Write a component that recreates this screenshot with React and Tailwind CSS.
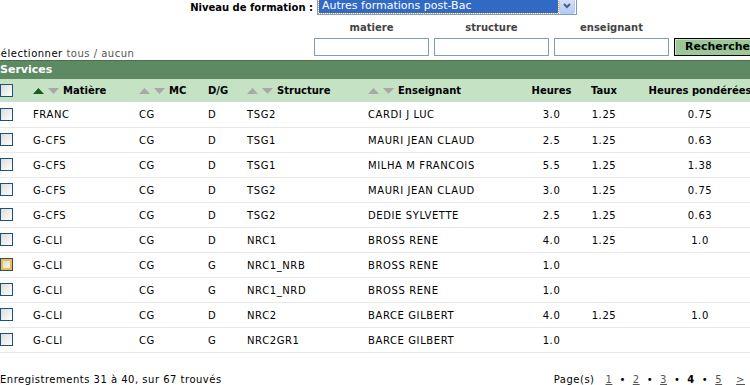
import React from "react";

const rows = [
  ["FRANC", "CG", "D", "TSG2", "CARDI J LUC", "3.0", "1.25", "0.75"],
  ["G-CFS", "CG", "D", "TSG1", "MAURI JEAN CLAUD", "2.5", "1.25", "0.63"],
  ["G-CFS", "CG", "D", "TSG1", "MILHA M FRANCOIS", "5.5", "1.25", "1.38"],
  ["G-CFS", "CG", "D", "TSG2", "MAURI JEAN CLAUD", "3.0", "1.25", "0.75"],
  ["G-CFS", "CG", "D", "TSG2", "DEDIE SYLVETTE", "2.5", "1.25", "0.63"],
  ["G-CLI", "CG", "D", "NRC1", "BROSS RENE", "4.0", "1.25", "1.0"],
  ["G-CLI", "CG", "G", "NRC1_NRB", "BROSS RENE", "1.0", "", ""],
  ["G-CLI", "CG", "G", "NRC1_NRD", "BROSS RENE", "1.0", "", ""],
  ["G-CLI", "CG", "D", "NRC2", "BARCE GILBERT", "4.0", "1.25", "1.0"],
  ["G-CLI", "CG", "G", "NRC2GR1", "BARCE GILBERT", "1.0", "", ""],
];

function Check({ hot }) {
  return (
    <div className="w-[13px] h-[13px] border border-[#1C5180] bg-gradient-to-br from-[#DCDCD7] to-[#FFFFFF] flex items-center justify-center">
      {hot && (
        <div className="w-[11px] h-[11px] border-2 border-[#F8B940] bg-gradient-to-br from-[#DCDCD7] to-[#F4F4F0]" />
      )}
    </div>
  );
}

function Sort({ active }) {
  return (
    <span className="inline-flex items-center gap-[4px] mr-[4px]">
      <svg width="11" height="6" viewBox="0 0 11 6">
        <polygon points="0,6 11,6 5.5,0" fill={active ? "#1E5B1E" : "#A8A8A8"} />
      </svg>
      <svg width="11" height="6" viewBox="0 0 11 6">
        <polygon points="0,0 11,0 5.5,6" fill="#A8A8A8" />
      </svg>
    </span>
  );
}

export default function App() {
  return (
    <div className="w-[750px] h-[385px] overflow-hidden bg-white text-black font-['DejaVu_Sans',sans-serif] text-[10px]">
      {/* top form */}
      <div className="h-[60px]">
        <div className="flex items-start pt-[1px]">
          <div className="w-[313px] shrink-0 text-right font-bold leading-[13px]">Niveau de formation :</div>
          <div className="ml-[4px] mt-[-4px] w-[260px] h-[18px] shrink-0 border border-[#7F9DB9] bg-white flex items-center pl-[1px] pr-[1px]">
            <div className="flex-1 h-[14px] bg-[#316AC5] outline-1 outline-dotted outline-[#E0A040] text-white text-[11px] leading-[14px] pl-[3px] whitespace-nowrap">
              Autres formations post-Bac
            </div>
            <div className="w-[16px] h-[16px] ml-[1px] rounded-[2px] bg-gradient-to-b from-[#D6E2FC] to-[#B5C9F3] border border-[#B9CCF5] flex items-center justify-center">
              <svg width="8" height="6" viewBox="0 0 8 6">
                <polyline points="1,1 4,4 7,1" fill="none" stroke="#4D6185" strokeWidth="2" />
              </svg>
            </div>
          </div>
        </div>
        <div className="mt-[7px] pl-[314px] flex gap-[5px] leading-[12px] font-bold text-[#444]">
          <div className="w-[115px] shrink-0 text-center">matiere</div>
          <div className="w-[115px] shrink-0 text-center">structure</div>
          <div className="w-[115px] shrink-0 text-center">enseignant</div>
        </div>
        <div className="mt-[4px] flex items-end">
          <div className="w-[314px] shrink-0 ml-[-6px] mr-[6px] mb-[-4px] leading-[12px] whitespace-nowrap tracking-[0.5px]">
            Sélectionner <span className="text-[#555]">tous / aucun</span>
          </div>
          <div className="flex gap-[5px] shrink-0">
            <div className="w-[115px] h-[18px] border border-[#7F9DB9] bg-white" />
            <div className="w-[115px] h-[18px] border border-[#7F9DB9] bg-white" />
            <div className="w-[115px] h-[18px] border border-[#7F9DB9] bg-white" />
          </div>
          <div className="ml-[5px] w-[90px] h-[18px] shrink-0 border border-black bg-[#9CC899] shadow-[inset_1px_1px_0_#C8E4C6] font-bold text-[11px] leading-[16px] pl-[10px] whitespace-nowrap">
            Recherche
          </div>
        </div>
      </div>

      {/* Services bar */}
      <div className="h-[19px] border-t border-[#467246] bg-[#5D8A63] text-white font-bold text-[11px] leading-[18px] whitespace-nowrap">
        Services
      </div>

      <table className="table-fixed border-collapse w-[773px]">
        <colgroup>
          <col className="w-[33px]" />
          <col className="w-[106px]" />
          <col className="w-[69px]" />
          <col className="w-[39px]" />
          <col className="w-[121px]" />
          <col className="w-[154px]" />
          <col className="w-[59px]" />
          <col className="w-[46px]" />
          <col className="w-[146px]" />
        </colgroup>
        <thead>
          <tr className="h-[23px] bg-[#C5E2C5] font-bold text-left">
            <th className="p-0 align-middle"><Check /></th>
            <th className="p-0 whitespace-nowrap"><span className="inline-flex items-center"><Sort active />Matière</span></th>
            <th className="p-0 whitespace-nowrap"><span className="inline-flex items-center"><Sort />MC</span></th>
            <th className="p-0 whitespace-nowrap">D/G</th>
            <th className="p-0 whitespace-nowrap"><span className="inline-flex items-center"><Sort />Structure</span></th>
            <th className="p-0 whitespace-nowrap"><span className="inline-flex items-center"><Sort />Enseignant</span></th>
            <th className="p-0 text-center whitespace-nowrap">Heures</th>
            <th className="p-0 text-center whitespace-nowrap">Taux</th>
            <th className="p-0 text-center whitespace-nowrap">Heures pondérées</th>
          </tr>
        </thead>
        <tbody className="tracking-[0.6px]">
          {rows.map((r, i) => (
            <tr key={i} className="h-[25px] border-b border-[#E8E8E8]">
              <td className="p-0 align-middle"><Check hot={i === 6} /></td>
              <td className="p-0 pt-[1px] whitespace-nowrap">{r[0]}</td>
              <td className="p-0 pt-[1px] whitespace-nowrap">{r[1]}</td>
              <td className="p-0 pt-[1px] whitespace-nowrap">{r[2]}</td>
              <td className="p-0 pt-[1px] whitespace-nowrap">{r[3]}</td>
              <td className="p-0 pt-[1px] whitespace-nowrap">{r[4]}</td>
              <td className="p-0 pt-[1px] text-center whitespace-nowrap">{r[5]}</td>
              <td className="p-0 pt-[1px] text-center whitespace-nowrap">{r[6]}</td>
              <td className="p-0 pt-[1px] text-center whitespace-nowrap">{r[7]}</td>
            </tr>
          ))}
        </tbody>
      </table>

      <div className="mt-[21px] flex justify-between leading-[12px] whitespace-nowrap tracking-[0.5px]">
        <div>Enregistrements 31 à 40, sur 67 trouvés</div>
        <div className="flex items-center gap-[7px] pr-[5px]">
          <span className="mr-[4px]">Page(s)</span>
          <span className="underline text-[#555]">1</span>
          <span>•</span>
          <span className="underline text-[#555]">2</span>
          <span>•</span>
          <span className="underline text-[#555]">3</span>
          <span>•</span>
          <span className="font-bold">4</span>
          <span>•</span>
          <span className="underline text-[#555]">5</span>
          <span className="underline text-[#555] ml-[7px]">&gt;</span>
        </div>
      </div>
    </div>
  );
}
